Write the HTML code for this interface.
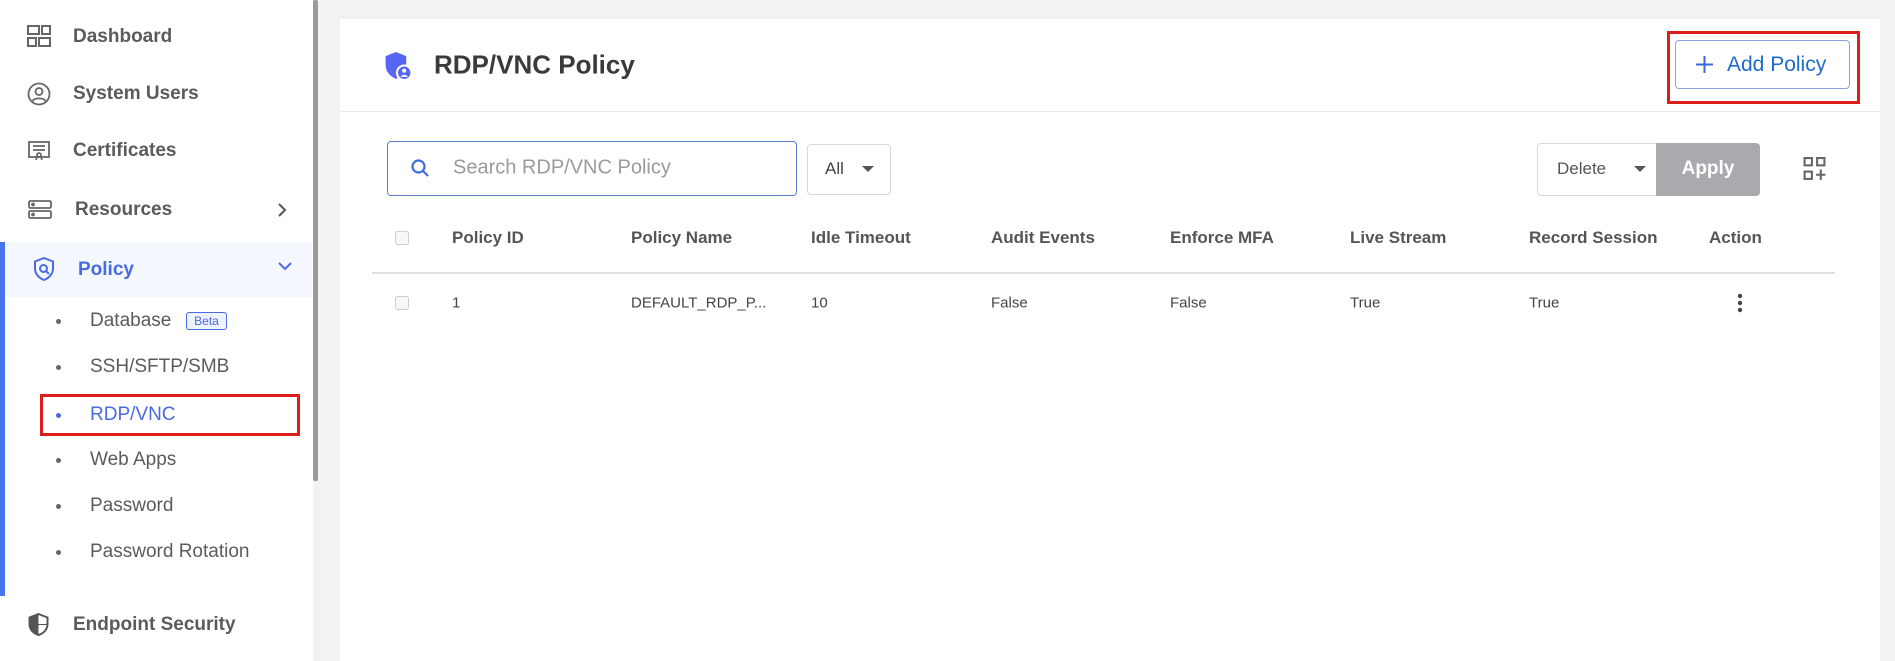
<!DOCTYPE html>
<html><head><meta charset="utf-8"><style>
*{box-sizing:border-box;margin:0;padding:0}
body{width:1895px;height:661px;background:#f2f2f2;font-family:"Liberation Sans",sans-serif;position:relative;overflow:hidden;color:#555}
.abs{position:absolute}
.side{left:0;top:0;width:313px;height:661px;background:#fff}
.sb{left:313px;top:0;width:5px;height:481px;background:#9a9a9a;border-radius:2px}
.ni{position:absolute;left:73px;font-size:19px;font-weight:bold;color:#5b5b5b;transform:translateY(-50%)}
.sub{position:absolute;left:90px;font-size:19px;color:#5b5b5b;transform:translateY(-50%)}
.dot{position:absolute;left:56px;width:5px;height:5px;border-radius:50%;background:#666}
.main{left:340px;top:19px;width:1540px;height:642px;background:#fff}
.th{position:absolute;top:238px;transform:translateY(-50%);font-size:17px;font-weight:bold;color:#555}
.td{position:absolute;top:303px;transform:translateY(-50%);font-size:15px;color:#444}
.cb{position:absolute;width:14px;height:14px;border:1px solid #ccc;border-radius:3px;background:#f7f7f7}
</style></head><body>
<div class="abs side"></div>
<div class="abs sb"></div>
<svg class="abs" style="left:27px;top:25px" width="24" height="23" viewBox="0 0 24 23" fill="none" stroke="#666" stroke-width="2"><rect x="1" y="1" width="11" height="8"/><rect x="15" y="1" width="8" height="8"/><rect x="1" y="13" width="8" height="8"/><rect x="12" y="13" width="11" height="8"/></svg>
<div class="ni" style="top:37px">Dashboard</div>
<svg class="abs" style="left:27px;top:82px" width="24" height="24" viewBox="0 0 24 24" fill="none" stroke="#666" stroke-width="1.8"><circle cx="12" cy="12" r="10.5"/><circle cx="12" cy="9.5" r="3.5"/><path d="M5.5 19c2-3.5 11-3.5 13 0"/></svg>
<div class="ni" style="top:94px">System Users</div>
<svg class="abs" style="left:28px;top:141px" width="22" height="20" viewBox="0 0 22 20" fill="none" stroke="#666" stroke-width="1.8"><rect x="1" y="1" width="20" height="15"/><path d="M5 5h12M5 9h12"/><circle cx="11" cy="14" r="2"/><path d="M9 16l-1 3M13 16l1 3"/></svg>
<div class="ni" style="top:151px">Certificates</div>
<svg class="abs" style="left:28px;top:200px" width="24" height="20" viewBox="0 0 24 20" fill="none" stroke="#666" stroke-width="1.8"><rect x="1" y="1" width="22" height="7" rx="1.5"/><rect x="1" y="11" width="22" height="7" rx="1.5"/><circle cx="5" cy="4.5" r="1"/><circle cx="5" cy="14.5" r="1"/></svg>
<div class="ni" style="top:210px;left:75px">Resources</div>
<svg class="abs" style="left:277px;top:203px" width="10" height="14" viewBox="0 0 10 14" fill="none" stroke="#555" stroke-width="2"><path d="M2 1l6 6-6 6"/></svg>
<div class="abs" style="left:5px;top:242px;width:307px;height:55px;background:#f4f7fe"></div>
<div class="abs" style="left:0;top:242px;width:5px;height:354px;background:#4a73f0"></div>
<svg class="abs" style="left:33px;top:257px" width="22" height="24" viewBox="0 0 22 24" fill="none" stroke="#4a6bdf" stroke-width="2"><path d="M11 1l9 3.5v7c0 5.5-4 9.5-9 11.5C6 21 2 17 2 11.5v-7z"/><circle cx="10.5" cy="11.5" r="3.5"/><path d="M13 14l3 3"/></svg>
<div class="ni" style="top:270px;left:78px;color:#4a6bdf">Policy</div>
<svg class="abs" style="left:278px;top:262px" width="14" height="9" viewBox="0 0 14 9" fill="none" stroke="#4a6bdf" stroke-width="2"><path d="M1 1l6 6 6-6"/></svg>
<div class="dot" style="top:319px"></div><div class="sub" style="top:321px">Database</div>
<div class="abs" style="left:186px;top:312px;width:41px;height:18px;border:1px solid #4a6bdf;border-radius:3px;background:#eef2fd;color:#4a6bdf;font-size:12px;text-align:center;line-height:16px">Beta</div>
<div class="dot" style="top:365px"></div><div class="sub" style="top:367px">SSH/SFTP/SMB</div>
<div class="dot" style="top:413px;background:#4a6bdf"></div><div class="sub" style="top:415px;color:#4a6bdf">RDP/VNC</div>
<div class="abs" style="left:40px;top:394px;width:260px;height:42px;border:3px solid #dd1c1c"></div>
<div class="dot" style="top:458px"></div><div class="sub" style="top:460px">Web Apps</div>
<div class="dot" style="top:504px"></div><div class="sub" style="top:506px">Password</div>
<div class="dot" style="top:550px"></div><div class="sub" style="top:552px">Password Rotation</div>
<svg class="abs" style="left:28px;top:613px" width="21" height="23" viewBox="0 0 21 23"><path d="M10.5 1l9 3.5v6.5c0 5.5-4 9.5-9 11C5.5 20.5 1.5 16.5 1.5 11V4.5z" fill="none" stroke="#555" stroke-width="2"/><path d="M10.5 1v21C5.5 20.5 1.5 16.5 1.5 11V4.5z" fill="#555"/><path d="M10.5 11h9v1H10.5z" fill="#555"/></svg>
<div class="ni" style="top:625px">Endpoint Security</div>

<div class="abs main"></div>
<svg class="abs" style="left:383px;top:51px" width="30" height="30" viewBox="0 0 26 29"><path d="M11 1l10 4v8c0 7-4 11-10 14C5 24 1 20 1 13V5z" fill="#5865f2"/><circle cx="19" cy="21" r="7" fill="#5865f2" stroke="#fff" stroke-width="2"/><circle cx="19" cy="19" r="2" fill="#fff"/><path d="M15.5 25c1-2.5 6-2.5 7 0z" fill="#fff"/></svg>
<div class="abs" style="left:434px;top:65px;transform:translateY(-50%);font-size:26px;font-weight:bold;color:#3a3a3a">RDP/VNC Policy</div>
<div class="abs" style="left:340px;top:111px;width:1540px;height:1px;background:#ececec"></div>
<div class="abs" style="left:1667px;top:31px;width:193px;height:73px;border:3px solid #dd1c1c"></div>
<div class="abs" style="left:1675px;top:40px;width:175px;height:49px;border:1px solid #8aa5d8;border-radius:4px;background:#fff"></div>
<svg class="abs" style="left:1696px;top:56px" width="17" height="17" viewBox="0 0 17 17" stroke="#3a66e0" stroke-width="2"><path d="M8.5 0v17M0 8.5h17"/></svg>
<div class="abs" style="left:1727px;top:65px;transform:translateY(-50%);font-size:21px;color:#1f6bcc">Add Policy</div>

<div class="abs" style="left:387px;top:141px;width:410px;height:55px;border:1.5px solid #5a80cf;border-radius:4px"></div>
<svg class="abs" style="left:411px;top:159px" width="18" height="19" viewBox="0 0 18 19" fill="none" stroke="#3d6ee0" stroke-width="2.2"><circle cx="7.5" cy="7.5" r="6"/><path d="M12 12l5 5"/></svg>
<div class="abs" style="left:453px;top:168px;transform:translateY(-50%);font-size:20px;color:#9a9a9a">Search RDP/VNC Policy</div>
<div class="abs" style="left:807px;top:144px;width:84px;height:51px;border:1px solid #d8d8d8;border-radius:4px"></div>
<div class="abs" style="left:825px;top:169px;transform:translateY(-50%);font-size:17px;color:#444">All</div>
<div class="abs" style="left:862px;top:166px;border-left:6px solid transparent;border-right:6px solid transparent;border-top:6px solid #555"></div>

<div class="abs" style="left:1537px;top:143px;width:121px;height:53px;border:1px solid #d8d8d8;border-radius:4px 0 0 4px"></div>
<div class="abs" style="left:1557px;top:169px;transform:translateY(-50%);font-size:17px;color:#555">Delete</div>
<div class="abs" style="left:1634px;top:166px;border-left:6px solid transparent;border-right:6px solid transparent;border-top:6px solid #555"></div>
<div class="abs" style="left:1656px;top:143px;width:104px;height:53px;background:#a9aaae;border-radius:0 4px 4px 0"></div>
<div class="abs" style="left:1708px;top:169px;transform:translate(-50%,-50%);font-size:19px;font-weight:bold;color:#fff">Apply</div>
<svg class="abs" style="left:1803px;top:157px" width="23" height="24" viewBox="0 0 21 23" fill="none" stroke="#666" stroke-width="2"><rect x="1" y="1" width="7" height="7"/><rect x="13" y="1" width="7" height="7"/><rect x="1" y="14" width="7" height="7"/><path d="M16.5 12v10M12 17h9"/></svg>

<div class="cb" style="left:395px;top:231px"></div>
<div class="th" style="left:452px">Policy ID</div>
<div class="th" style="left:631px">Policy Name</div>
<div class="th" style="left:811px">Idle Timeout</div>
<div class="th" style="left:991px">Audit Events</div>
<div class="th" style="left:1170px">Enforce MFA</div>
<div class="th" style="left:1350px">Live Stream</div>
<div class="th" style="left:1529px">Record Session</div>
<div class="th" style="left:1709px">Action</div>
<div class="abs" style="left:372px;top:272px;width:1463px;height:2px;background:#e0e0e0"></div>
<div class="cb" style="left:395px;top:296px"></div>
<div class="td" style="left:452px">1</div>
<div class="td" style="left:631px">DEFAULT_RDP_P...</div>
<div class="td" style="left:811px">10</div>
<div class="td" style="left:991px">False</div>
<div class="td" style="left:1170px">False</div>
<div class="td" style="left:1350px">True</div>
<div class="td" style="left:1529px">True</div>
<svg class="abs" style="left:1737px;top:293px" width="6" height="20" viewBox="0 0 6 20" fill="#444"><circle cx="3" cy="3" r="2.2"/><circle cx="3" cy="10" r="2.2"/><circle cx="3" cy="17" r="2.2"/></svg>
</body></html>
